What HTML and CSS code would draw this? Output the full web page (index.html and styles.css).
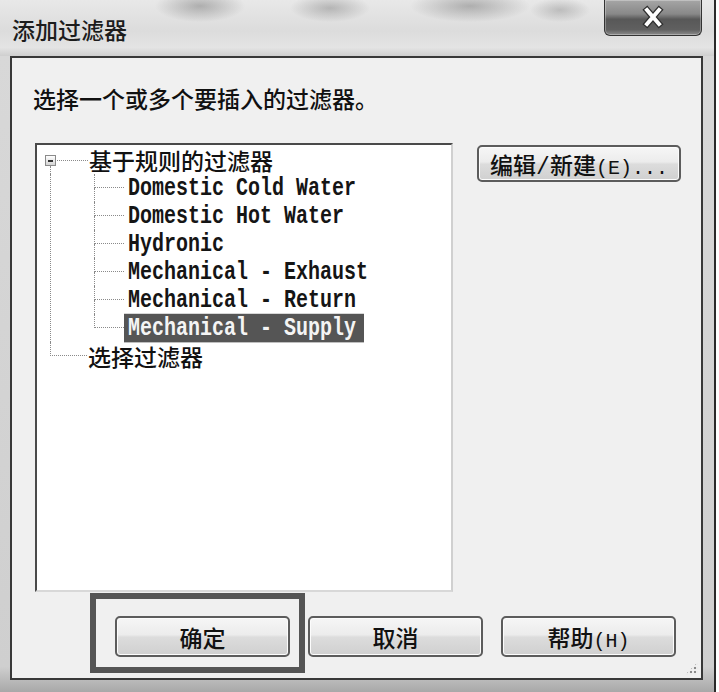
FILE: index.html
```html
<!DOCTYPE html>
<html lang="zh-CN">
<head>
    <meta charset="UTF-8">
    <title>添加过滤器</title>
    <link rel="stylesheet" href="styles.css">
</head>
<body>

    <div class="window">
        <!-- 标题栏 -->
        <div class="titlebar">
            <span class="title">添加过滤器</span>
            <button class="close" aria-label="关闭">
                <svg width="28" height="26" viewBox="0 0 28 26">
                    <path d="M8 5 L20 19 M20 5 L8 19" stroke="#2e2e2e" stroke-width="6.5" stroke-linecap="square"/>
                    <path d="M8 5 L20 19 M20 5 L8 19" stroke="#fff" stroke-width="4" stroke-linecap="square"/>
                </svg>
            </button>
        </div>

        <div class="frame">
            <div class="panel">
                <p class="prompt">选择一个或多个要插入的过滤器。</p>

                <div class="main">
                    <!-- 过滤器树 -->
                    <div class="list">
                        <div class="tree">
                            <div class="row root">
                                <span class="toggle"></span>
                                <span class="dash"></span>
                                <span class="cjk">基于规则的过滤器</span>
                            </div>
                            <div class="kids">
                                <ul class="children">
                                    <li><span class="elbow"><i></i><i></i></span><span class="mono">Domestic Cold Water</span></li>
                                    <li><span class="elbow"><i></i><i></i></span><span class="mono">Domestic Hot Water</span></li>
                                    <li><span class="elbow"><i></i><i></i></span><span class="mono">Hydronic</span></li>
                                    <li><span class="elbow"><i></i><i></i></span><span class="mono">Mechanical - Exhaust</span></li>
                                    <li><span class="elbow"><i></i><i></i></span><span class="mono">Mechanical - Return</span></li>
                                    <li class="last"><span class="elbow"><i></i><i></i></span><span class="mono selected">Mechanical - Supply</span></li>
                                </ul>
                            </div>
                            <div class="row last">
                                <span class="elbow wide"><i></i><i></i></span>
                                <span class="cjk">选择过滤器</span>
                            </div>
                        </div>
                    </div>

                    <div class="side">
                        <button class="btn edit">编辑/新建<span class="ak">(E)...</span></button>
                    </div>
                </div>

                <div class="actions">
                    <button class="btn">确定</button>
                    <button class="btn">取消</button>
                    <button class="btn">帮助<span class="ak">(H)</span></button>
                </div>

                <!-- 标注框 -->
                <div class="focus-mark"></div>
                <span class="grip"></span>
            </div>
        </div>
    </div>

</body>
</html>
```

FILE: styles.css
```css
body {
    margin: 0;
    background: #fff;
    font-family: "Noto Sans CJK SC", sans-serif;
    color: #111;
}

.window {
    width: 716px;
    height: 692px;
    box-sizing: border-box;
    border-right: 2px solid #2a2a2a;
    display: flex;
    flex-direction: column;
    background: linear-gradient(to right, #b4b4b4 0, #d8d8d8 7px, #dedede 50%, #c6c6c6 100%);
}

.titlebar {
    height: 56px;
    flex-shrink: 0;
    display: flex;
    align-items: flex-start;
    background:
        radial-gradient(ellipse 45px 16px at 200px 6px, rgba(70, 70, 70, 0.35), transparent),
        radial-gradient(ellipse 40px 14px at 330px 8px, rgba(70, 70, 70, 0.3), transparent),
        radial-gradient(ellipse 60px 16px at 470px 6px, rgba(70, 70, 70, 0.35), transparent),
        radial-gradient(ellipse 30px 12px at 560px 10px, rgba(70, 70, 70, 0.25), transparent),
        linear-gradient(#e8e8e8, #dcdcdc 55%, #e4e4e4 85%, #cfcfcf);
}

.title {
    font-size: 23px;
    font-weight: 500;
    line-height: 30px;
    padding: 14px 0 0 12px;
    color: #1c1c1c;
}

.close {
    margin-left: auto;
    margin-right: 12px;
    width: 98px;
    height: 36px;
    padding: 0;
    border: 1px solid #333;
    border-top: none;
    border-radius: 0 0 6px 6px;
    background: linear-gradient(#a6a6a6, #888 40%, #585858 55%, #606060 85%, #8c8c8c);
    box-shadow: inset 0 0 0 1px rgba(255, 255, 255, 0.3);
    display: flex;
    align-items: center;
    justify-content: center;
}

.frame {
    flex: 1;
    display: flex;
    padding: 0 11px 12px 10px;
    background: linear-gradient(#d8d8d8, #cfcfcf 96%, #a8a8a8);
}

.panel {
    flex: 1;
    position: relative;
    background: #f0f0f0;
    border: 2px solid #383838;
    padding: 25px 0 0 21px;
}

.prompt {
    margin: 0;
    font-size: 23px;
    font-weight: 500;
    line-height: 30px;
}

.main {
    display: flex;
    gap: 24px;
    margin-top: 30px;
}

.list {
    width: 418px;
    height: 449px;
    box-sizing: border-box;
    margin-left: 2px;
    background: #fff;
    border: 2px solid;
    border-color: #4a4a4a #d0d0d0 #d8d8d8 #4a4a4a;
}

.tree {
    padding-top: 1px;
}

.row {
    display: flex;
    align-items: center;
    height: 28px;
}

.root {
    align-items: flex-start;
}

.toggle {
    width: 9px;
    height: 9px;
    margin: 9px 0 0 8px;
    flex-shrink: 0;
    border: 1px solid #8a8a8a;
    background: linear-gradient(#fff, #d4d4d4);
    display: flex;
    align-items: center;
    justify-content: center;
}

.toggle::before {
    content: "";
    width: 5px;
    height: 2px;
    background: #333;
}

.dash {
    width: 31px;
    margin: 14px 0 0 1px;
    border-top: 1px dotted #8a8a8a;
}

.root .cjk {
    margin-left: 1px;
}

/* 展开框下方接到子节点的竖线 */
.root::after {
    content: "";
    order: -1;
    width: 0;
    height: 8px;
    margin: 20px -1px 0 13px;
    border-left: 1px dotted #8a8a8a;
}

.root .toggle {
    margin-left: -5px;
}

.cjk {
    font-size: 23px;
    font-weight: 500;
    line-height: 28px;
    margin-left: 1px;
}

.kids {
    margin-left: 13px;
    border-left: 1px dotted #8a8a8a;
    padding-left: 43px;
}

.children {
    list-style: none;
    margin: 0;
    padding: 0;
}

.children li {
    display: flex;
    height: 28px;
}

.elbow {
    width: 30px;
    flex-shrink: 0;
    align-self: stretch;
    display: flex;
    flex-direction: column;
}

.elbow.wide {
    width: 37px;
    margin-left: 13px;
}

.elbow i {
    display: block;
    box-sizing: border-box;
}

.elbow i:first-child {
    height: 14px;
    border-left: 1px dotted #8a8a8a;
    border-bottom: 1px dotted #8a8a8a;
}

.elbow i:last-child {
    flex: 1;
    border-left: 1px dotted #8a8a8a;
}

.last .elbow i:last-child {
    border-left: none;
}

.mono {
    align-self: center;
    display: inline-block;
    font-family: "Liberation Mono", monospace;
    font-size: 20px;
    font-weight: bold;
    line-height: 21.5px;
    padding: 0 8px 0 4px;
    white-space: pre;
    transform: scaleY(1.3);
    color: #151515;
}

.mono.selected {
    background: #555;
    color: #f4f4f4;
}

.btn {
    font-family: "Liberation Mono", "Noto Sans CJK SC", sans-serif;
    font-size: 23px;
    font-weight: 500;
    color: #111;
    padding: 0;
    border: 2px solid #5c5c5c;
    border-radius: 5px;
    background: linear-gradient(#f6f6f6, #ececec 45%, #dcdcdc 52%, #d0d0d0);
    box-shadow: inset 0 0 0 1px #fcfcfc;
    cursor: pointer;
}

.btn .ak {
    font-size: 20px;
}

.edit {
    width: 204px;
    height: 37px;
    margin-top: 2px;
}

.actions {
    display: flex;
    gap: 18px;
    margin: 24px 0 0 82px;
}

.actions .btn {
    width: 175px;
    height: 41px;
}

.focus-mark {
    position: absolute;
    left: 78px;
    top: 535px;
    width: 215px;
    height: 80px;
    box-sizing: border-box;
    border: 6px solid #555;
}

.grip {
    position: absolute;
    right: 3px;
    bottom: 3px;
    width: 13px;
    height: 13px;
    background: radial-gradient(circle, #8a8a8a 1px, transparent 1.6px) 0 0 / 4px 4px;
    clip-path: polygon(100% 0, 100% 100%, 0 100%);
}
```
